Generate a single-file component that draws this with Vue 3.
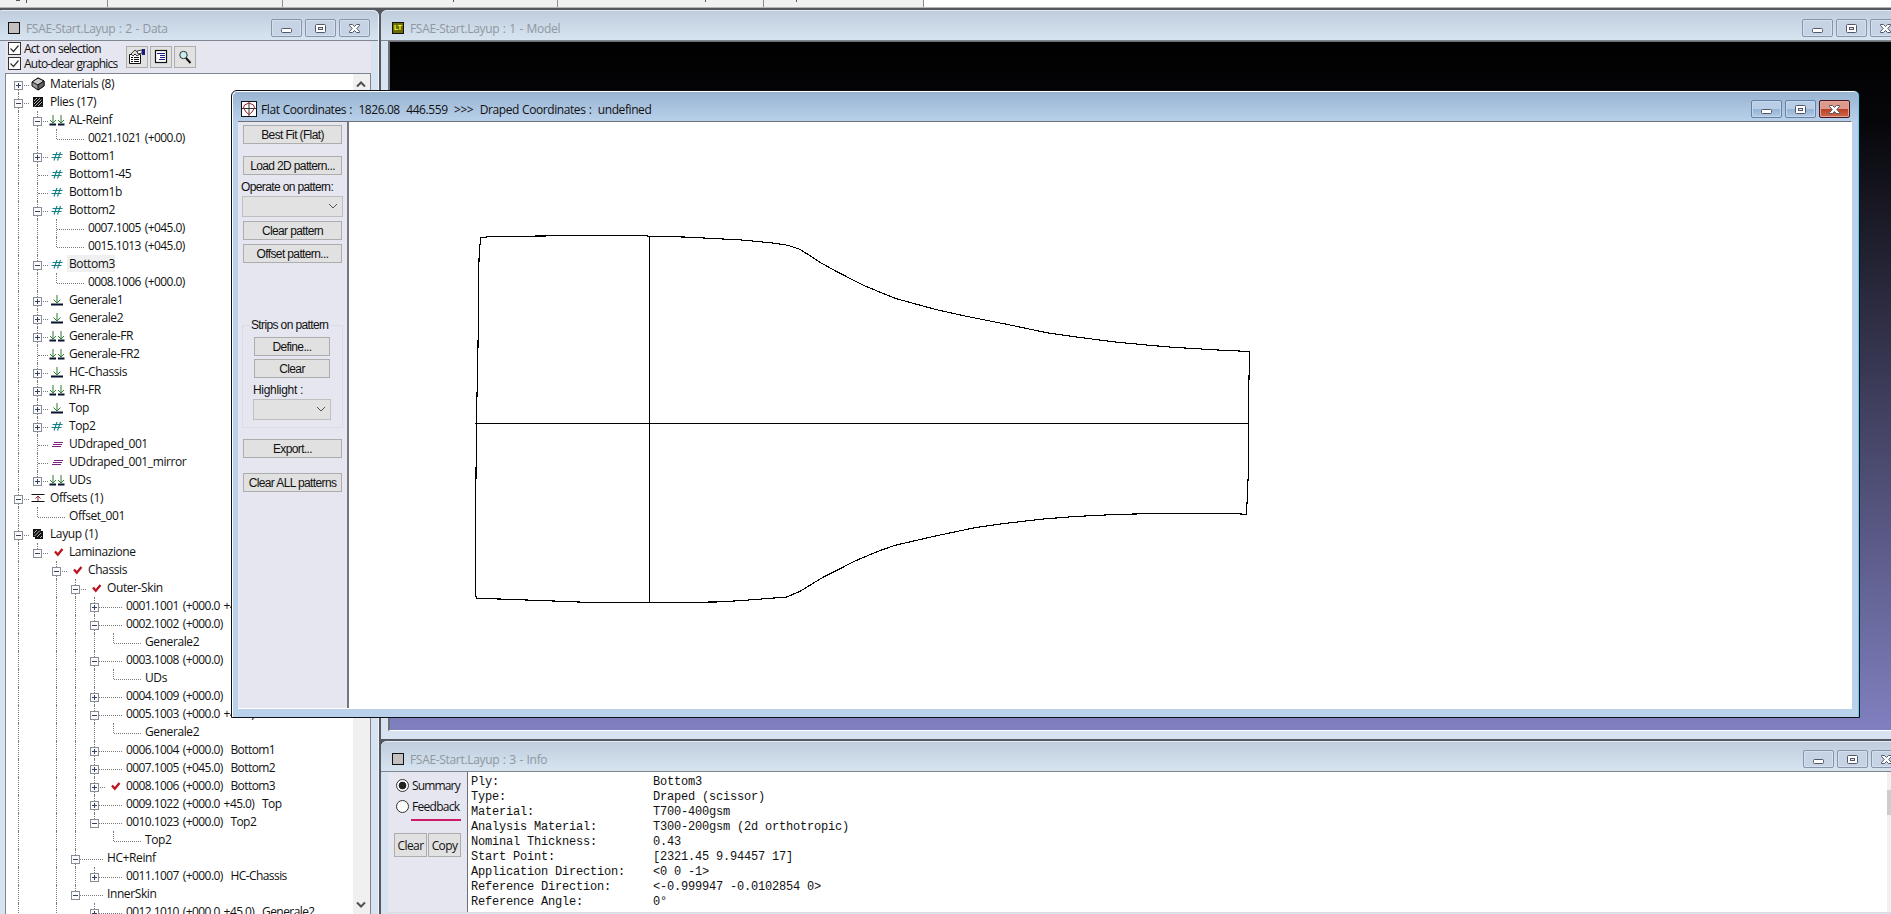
<template>
  <div class="desktop">
    <svg class="symbols" width="0" height="0">
      <symbol id="min" viewBox="0 0 13 11">
        <rect x="1.5" y="5.5" width="10" height="4" rx="1" fill="#fff" stroke="#535666" />
      </symbol>
      <symbol id="max" viewBox="0 0 13 11">
        <rect x="1.5" y="1.5" width="10" height="8" rx="1" fill="#fff" stroke="#535666" />
        <rect x="4.5" y="4.5" width="4" height="2" fill="#dfe8f2" stroke="#535666" />
      </symbol>
      <symbol id="close" viewBox="0 0 13 11">
        <path d="M1.5 1.5h3l2 2 2-2h3v1l-2.7 3 2.7 3v1h-3l-2-2-2 2h-3v-1l2.7-3-2.7-3z" fill="#fff" stroke="#535666" />
      </symbol>
      <symbol id="cube" viewBox="0 0 16 14">
        <path d="M2 5l6-4 6 3v5l-6 4-6-4z" fill="#999" stroke="#111" />
        <path d="M2 5l6-4 6 3-6 4z" fill="#c8c8c8" stroke="#111" />
        <path d="M8 8l6-4v5l-6 4z" fill="#666" stroke="#111" />
      </symbol>
      <symbol id="plies" viewBox="0 0 16 14">
        <rect x="3" y="2" width="10" height="10" fill="#111" />
        <path d="M4 6l3-3M4 9l6-6M4.500 11.500l7-7M8 11l4-4M11 11.500l1-1" stroke="#ddd" stroke-width="0.8" fill="none" />
      </symbol>
      <symbol id="layup" viewBox="0 0 16 14">
        <path d="M3 2h8v2h2v8H5v-2H3z" fill="#111" />
        <path d="M4 6l3-3M4.500 9l5.500-5.500M7 10l4-4M10 11l2-2" stroke="#ddd" stroke-width="0.8" fill="none" />
      </symbol>
      <symbol id="offset" viewBox="0 0 16 14">
        <path d="M1.500 3.500h13M1.500 10.500h13" stroke="#111" stroke-width="1.200" />
        <path d="M8 10V5M5.500 7.500L8 5l2.500 2.500" stroke="#8c2832" fill="none" />
      </symbol>
      <symbol id="hash" viewBox="0 0 16 14">
        <path d="M3.500 5.500h10M2.500 8.500h10M8 3L5 11.500M11.500 3L8.500 11.500" stroke="#128087" stroke-width="1.100" fill="none" />
      </symbol>
      <symbol id="arrow" viewBox="0 0 16 14">
        <path d="M8 2v8M4.500 6.500L8 10l3.500-3.500" stroke="#2c7f33" fill="none" />
        <rect x="2" y="10.500" width="12" height="2" fill="#07122e" />
      </symbol>
      <symbol id="arrows" viewBox="0 0 16 14">
        <path d="M4 2v8M1 7l3 3 3-3M12 2v8M9 7l3 3 3-3" stroke="#2c7f33" fill="none" />
        <path d="M.5 11.500h6.500M9 11.500h6.500" stroke="#07122e" stroke-width="2" />
      </symbol>
      <symbol id="ud" viewBox="0 0 16 14">
        <path d="M5 5.500h9M4 7.500h9M3 9.500h9" stroke="#80207e" stroke-width="1.100" />
      </symbol>
      <symbol id="check" viewBox="0 0 16 14">
        <path d="M6 6.500l2.800 3.300L13.500 4" stroke="#b9141f" stroke-width="2.300" fill="none" />
      </symbol>
    </svg>

    <div class="ribbon">
      <i v-for="(w, i) in ribbonCells" :key="i" :style="{ width: w + 'px' }"></i>
      <svg class="ticks" width="924" height="3"><path d="M16 .5h4M26.500 0v3M453.500 0v2M705.500 0v2M796.500 0v2" stroke="#555" /></svg>
    </div>

    <!-- Data tree -->
    <section class="win data-win">
      <header class="title">
        <span class="doc-icon"></span>
        <span class="caption">FSAE-Start.Layup : 2 - Data</span>
        <span class="controls">
          <b v-for="c in controls" :key="c" :class="c"><svg width="13" height="11"><use :href="'#' + c" /></svg></b>
        </span>
      </header>
      <div class="toolbar">
        <div class="checks">
          <label v-for="t in toggles" :key="t">
            <svg width="13" height="13"><rect x=".5" y=".5" width="12" height="12" fill="#fff" stroke="#333" /><path d="M2.500 6.500l3 3 5-6" fill="none" stroke="#333" stroke-width="1.200" /></svg>
            <span>{{ t }}</span>
          </label>
        </div>
        <div class="tools">
          <button>
            <svg width="18" height="18"><path d="M1.500 6.500h11v9h-11z" fill="#fff" stroke="#111" /><path d="M3 9.500h2M6 9.500h5M3 11.500h2M6 11.500h5M3 13.500h2M6 13.500h5" stroke="#111" /><path d="M3 6l4-4 5 4-3 2-2-2-2 2z" fill="#ddd" stroke="#111" stroke-width=".8" /><path d="M9 3l5-1v3l-4 1z" fill="#fff" stroke="#111" stroke-width=".8" /><path d="M14 1h3v6h-3z" fill="#1a1a80" /></svg>
          </button>
          <button>
            <svg width="18" height="18"><rect x="3.500" y="2.500" width="11" height="12" fill="#fff" stroke="#111" stroke-width="1.200" /><path d="M5 5.500h2M7 5.500h6M8 7.500h5M8 9.500h5M7 11.500h6" stroke="#1a1a80" /></svg>
          </button>
          <button>
            <svg width="18" height="18"><circle cx="7.500" cy="7" r="3.700" fill="#c8f0f0" stroke="#333" /><path d="M10 10l4.500 5" stroke="#111" stroke-width="2" /></svg>
          </button>
        </div>
      </div>
      <div class="tree-box">
        <div class="tree">
          <div v-for="(row, i) in rows" :key="i" class="row">
            <span v-for="(line, l) in row.guides" :key="l" class="cell" :class="{ line }"></span>
            <span class="cell own" :class="{ line: row.continues, first: i === 0 }">
              <i class="dots" :class="{ long: !row.icon }"></i>
              <svg v-if="row.box" class="box" width="9" height="9">
                <rect x=".5" y=".5" width="8" height="8" fill="#fbfbfb" stroke="#8a8c98" />
                <path :d="row.box === '+' ? 'M2 4.500h5M4.500 2v5' : 'M2 4.500h5'" stroke="#33415e" />
              </svg>
            </span>
            <span class="icon"><svg v-if="row.icon" width="16" height="14"><use :href="'#' + row.icon" /></svg></span>
            <span class="text" :class="{ num: /^\d/.test(row.text), selected: row.selected }">{{ row.text }}</span>
          </div>
        </div>
        <div class="scroll">
          <svg width="17" height="18"><path d="M4 11.500l4-4 4 4" /></svg>
          <svg width="17" height="18"><path d="M4 6.500l4 4 4-4" /></svg>
        </div>
      </div>
    </section>

    <!-- Model view -->
    <section class="win model-win">
      <header class="title">
        <span class="lt-icon">LT</span>
        <span class="caption">FSAE-Start.Layup : 1 - Model</span>
        <span class="controls">
          <b v-for="c in controls" :key="c" :class="c"><svg width="13" height="11"><use :href="'#' + c" /></svg></b>
        </span>
      </header>
      <div class="viewport"></div>
    </section>

    <!-- Info -->
    <section class="win info-win">
      <header class="title">
        <span class="doc-icon"></span>
        <span class="caption">FSAE-Start.Layup : 3 - Info</span>
        <span class="controls">
          <b v-for="c in controls" :key="c" :class="c"><svg width="13" height="11"><use :href="'#' + c" /></svg></b>
        </span>
      </header>
      <div class="info-body">
        <div class="info-side">
          <label><span class="radio on"></span>Summary</label>
          <label><span class="radio"></span>Feedback</label>
          <div class="pink"></div>
          <div class="info-buttons"><button>Clear</button><button>Copy</button></div>
        </div>
        <div class="info-text">
          <template v-for="[k, v] in info" :key="k"><span>{{ k }}:</span><span>{{ v }}</span></template>
        </div>
        <div class="info-scroll"><i></i></div>
      </div>
    </section>

    <!-- Flat pattern -->
    <section class="flat-win">
      <header class="title">
        <svg class="flat-icon" width="16" height="16"><rect x=".5" y=".5" width="15" height="15" fill="#fff" stroke="#111" /><path d="M8 1v14M1 7.500h14" stroke="#333" /><path d="M3.500 4l4.500-2 4.500 2 1 3-2.500 4-3 2.500L5 11 2.500 7z" fill="none" stroke="#a02030" /></svg>
        <span class="caption">{{ flatTitle }}</span>
        <span class="controls active">
          <b v-for="c in controls" :key="c" :class="c"><svg width="13" height="11"><use :href="'#' + c" /></svg></b>
        </span>
      </header>
      <div class="flat-body">
        <aside class="flat-side">
          <button>Best Fit (Flat)</button>
          <button class="load">Load 2D pattern...</button>
          <span class="operate">Operate on pattern:</span>
          <div class="select"><svg width="10" height="7"><path d="M1 1l4 4 4-4" /></svg></div>
          <button class="clear">Clear pattern</button>
          <button class="offset">Offset pattern...</button>
          <fieldset>
            <legend>Strips on pattern</legend>
            <button>Define...</button>
            <button>Clear</button>
            <span class="highlight">Highlight&nbsp;:</span>
            <div class="select"><svg width="10" height="7"><path d="M1 1l4 4 4-4" /></svg></div>
          </fieldset>
          <button class="export">Export...</button>
          <button class="all">Clear ALL patterns</button>
        </aside>
        <svg class="canvas" width="1502" height="586" viewBox="349 122 1502 586">
          <polygon :points="outline" />
          <path d="M475 423.500H1248.500M649.500 236V602" />
        </svg>
      </div>
    </section>
  </div>
</template>

<script setup>
  const controls = ['min', 'max', 'close'];
  const toggles = ['Act on selection', 'Auto-clear graphics'];
  const ribbonCells = [108, 175, 275, 206, 160];
  const flatTitle = 'Flat Coordinates :  1826.08  446.559  >>>  Draped Coordinates :  undefined';

  // [depth, expander, icon, label]
  const nodes = [
    [0, '+', 'cube', 'Materials (8)'],
    [0, '-', 'plies', 'Plies (17)'],
    [1, '-', 'arrows', 'AL-Reinf'],
    [2, '', '', '0021.1021 (+000.0)'],
    [1, '+', 'hash', 'Bottom1'],
    [1, '', 'hash', 'Bottom1-45'],
    [1, '', 'hash', 'Bottom1b'],
    [1, '-', 'hash', 'Bottom2'],
    [2, '', '', '0007.1005 (+045.0)'],
    [2, '', '', '0015.1013 (+045.0)'],
    [1, '-', 'hash', 'Bottom3'],
    [2, '', '', '0008.1006 (+000.0)'],
    [1, '+', 'arrow', 'Generale1'],
    [1, '+', 'arrow', 'Generale2'],
    [1, '+', 'arrows', 'Generale-FR'],
    [1, '', 'arrows', 'Generale-FR2'],
    [1, '+', 'arrow', 'HC-Chassis'],
    [1, '+', 'arrows', 'RH-FR'],
    [1, '+', 'arrow', 'Top'],
    [1, '+', 'hash', 'Top2'],
    [1, '', 'ud', 'UDdraped_001'],
    [1, '', 'ud', 'UDdraped_001_mirror'],
    [1, '+', 'arrows', 'UDs'],
    [0, '-', 'offset', 'Offsets (1)'],
    [1, '', '', 'Offset_001'],
    [0, '-', 'layup', 'Layup (1)'],
    [1, '-', 'check', 'Laminazione'],
    [2, '-', 'check', 'Chassis'],
    [3, '-', 'check', 'Outer-Skin'],
    [4, '+', '', '0001.1001 (+000.0 +45.0)  Generale1'],
    [4, '-', '', '0002.1002 (+000.0)  Generale2'],
    [5, '', '', 'Generale2'],
    [4, '-', '', '0003.1008 (+000.0)  UDs'],
    [5, '', '', 'UDs'],
    [4, '+', '', '0004.1009 (+000.0)  UDs'],
    [4, '-', '', '0005.1003 (+000.0 +45.0)'],
    [5, '', '', 'Generale2'],
    [4, '+', '', '0006.1004 (+000.0)  Bottom1'],
    [4, '+', '', '0007.1005 (+045.0)  Bottom2'],
    [4, '+', 'check', '0008.1006 (+000.0)  Bottom3'],
    [4, '+', '', '0009.1022 (+000.0 +45.0)  Top'],
    [4, '-', '', '0010.1023 (+000.0)  Top2'],
    [5, '', '', 'Top2'],
    [3, '-', '', 'HC+Reinf'],
    [4, '+', '', '0011.1007 (+000.0)  HC-Chassis'],
    [3, '-', '', 'InnerSkin'],
    [4, '+', '', '0012.1010 (+000.0 +45.0)  Generale2']
  ];

  // levels that still have siblings below the visible part of the tree
  const openLevels = [0, 2];

  function hasNext(index, level) {
    for (let j = index + 1; j < nodes.length; j++) {
      if (nodes[j][0] === level) return true;
      if (nodes[j][0] < level) return false;
    }
    return openLevels.includes(level);
  }

  const rows = nodes.map(([depth, box, icon, text], i) => ({
    box,
    icon,
    text,
    selected: text === 'Bottom3',
    continues: hasNext(i, depth),
    guides: Array.from({ length: depth }, (_, l) => hasNext(i, l))
  }));

  const info = [
    ['Ply', 'Bottom3'],
    ['Type', 'Draped (scissor)'],
    ['Material', 'T700-400gsm'],
    ['Analysis Material', 'T300-200gsm (2d orthotropic)'],
    ['Nominal Thickness', '0.43'],
    ['Start Point', '[2321.45 9.94457 17]'],
    ['Application Direction', '<0 0 -1>'],
    ['Reference Direction', '<-0.999947 -0.0102854 0>'],
    ['Reference Angle', '0°']
  ];

  const outline = [
    // top edge
    '480.5,237.5 493,236.5 590,235.5 645,235.5 650,236.5 684,237 708,238.2 741.7,240 773,243 788,245.3',
    '800,249.3 821.7,263.3 838,272.3 860,283.5 865,286 895,298.3 935,309.3 968.3,316.7 1006.7,324.3',
    '1046.7,332.7 1076.7,337 1115,342 1150,345.3 1173,347.3 1218,350 1249.5,351.5',
    // right edge
    '1249.3,362 1248.5,404 1248.3,473 1246.5,514.5',
    // bottom edge
    '1235,513.5 1155,513.5 1115,514.5 1075,516.5 1040,519.3 1003,523.7 975,527.7 936.7,535.7 895,545.3',
    '878,551.3 855,561 840,568.7 823,577.3 800,591.3 786.7,597 740,600.7 716,602 649.5,602.5 591,602.5',
    '553,601 499,599 476.5,598.3',
    // left edge
    '475.5,594 475.5,531 476.5,420 478,346.7 479,259'
  ].join(' ');
</script>

<style>
  body {
    overflow: hidden;
  }
</style>

<style scoped>
  .desktop {
    position: relative;
    width: 1891px;
    height: 914px;
    overflow: hidden;
    background: #55585e;
    font-family: "Open Sans", "Noto Sans", sans-serif;
    font-size: 12px;
    color: #111;
  }

  .desktop * {
    box-sizing: border-box;
  }

  .symbols {
    position: absolute;
  }

  .ribbon {
    display: flex;
    height: 8px;
    background: #fff;
    border-bottom: 1px solid #b4b4b4;
  }

  .ribbon i {
    height: 7px;
    background: #f0f0f0;
    border-right: 1px solid #8c8c8c;
  }

  .ticks {
    position: absolute;
    left: 0;
    top: 0;
  }

  /* windows */
  .win {
    position: absolute;
    display: flex;
    flex-direction: column;
    background: #d7e3f0;
    border-radius: 6px 6px 0 0;
  }

  .data-win {
    left: -3px;
    top: 10px;
    width: 382px;
    height: 910px;
    padding: 0 7px 0 8px;
    border-right: 1px solid #eef3f8;
  }

  .model-win {
    left: 381px;
    top: 10px;
    width: 1518px;
    height: 729px;
    padding: 0 0 8px 7px;
  }

  .info-win {
    left: 381px;
    top: 741px;
    width: 1518px;
    height: 180px;
    padding: 0 0 0 7px;
  }

  .title {
    display: flex;
    flex: none;
    align-items: center;
    height: 31px;
  }

  .win .title {
    margin: 0 -7px;
    padding: 5px 7px 0;
    border-radius: 6px 6px 0 0;
    border-top: 1px solid #e4ebf3;
    border-bottom: 1px solid #7f868f;
    background: linear-gradient(#c0cddd, #d7e4f0);
  }

  .data-win .title {
    padding-left: 11px;
    padding-right: 8px;
    margin: 0 -7px 0 -8px;
  }

  .model-win .title,
  .info-win .title {
    padding-left: 11px;
  }

  .info-win .title {
    padding-right: 4px;
  }

  .model-win .title {
    padding-right: 5px;
  }

  .caption {
    flex: 1;
    white-space: pre;
    letter-spacing: -0.42px;
    word-spacing: 0.5px;
  }

  .win .caption {
    color: #8f979f;
    letter-spacing: -0.32px;
    word-spacing: 0.8px;
  }

  .doc-icon {
    width: 12px;
    height: 12px;
    margin-right: 6px;
    background: #c3c0bf;
    border: 1px solid #111;
  }

  .lt-icon {
    width: 12px;
    height: 12px;
    margin-right: 6px;
    background: #6b6b00;
    border: 1px solid #111;
    color: #ffff30;
    font: bold 7px/10px "Liberation Sans", sans-serif;
    text-align: center;
  }

  .controls {
    display: flex;
    gap: 3px;
    height: 18px;
  }

  .controls b {
    display: flex;
    width: 31px;
    height: 18px;
    align-items: center;
    justify-content: center;
    border: 1px solid #8794ab;
    border-radius: 2px;
    box-shadow: inset 0 0 0 1px #d5e0ed;
    background: #c6d3e4;
  }

  .controls.active b {
    border-color: #6580a3;
    background: linear-gradient(#b9cee6 50%, #94b2d3 50%, #b1cae5);
    box-shadow: inset 0 0 0 1px #c3d8ee;
  }

  .controls.active .close {
    border-color: #431422;
    background: linear-gradient(#dc9a8c 48%, #b83b22 48%, #cd6a4c);
    box-shadow: inset 0 0 0 1px #e2a598;
  }

  /* data window */
  .toolbar {
    display: flex;
    flex: none;
    height: 32px;
    padding-left: 3px;
    background: #e6e6f0;
  }

  .checks {
    display: flex;
    flex-direction: column;
    gap: 2px;
    width: 118px;
    padding-top: 1px;
  }

  .checks label {
    display: flex;
    gap: 3px;
    height: 13px;
    line-height: 14px;
    white-space: nowrap;
    letter-spacing: -0.78px;
    word-spacing: 0.5px;
  }

  .checks svg {
    flex: none;
  }

  .tools {
    display: flex;
    gap: 2px;
    padding-top: 5px;
  }

  button {
    display: flex;
    align-items: center;
    justify-content: center;
    padding: 0;
    border: 1px solid #adadad;
    background: #e1e1e1;
    color: #111;
    white-space: nowrap;
  }

  .tools button {
    width: 22px;
    height: 22px;
  }

  .tree-box {
    display: flex;
    flex: 1;
    border: 1px solid #7f868f;
    background: #fff;
  }

  .tree {
    flex: 1;
    padding: 1px 0 0 3px;
    overflow: hidden;
  }

  .row {
    display: flex;
    height: 18px;
    line-height: 17px;
    white-space: pre;
  }

  .cell {
    position: relative;
    flex: none;
    width: 19px;
    height: 18px;
  }

  .cell.line::before,
  .own::before {
    content: "";
    position: absolute;
    left: 9px;
    top: 0;
    height: 10px;
    border-left: 1px dotted #7a7a7a;
  }

  .cell.line::before {
    height: 18px;
  }

  .own.first::before {
    top: 10px;
    height: 8px;
  }

  .dots {
    position: absolute;
    left: 10px;
    top: 10px;
    width: 10px;
    border-top: 1px dotted #7a7a7a;
  }

  .dots.long {
    width: 27px;
  }

  .box {
    position: absolute;
    left: 5px;
    top: 6px;
  }

  .icon {
    flex: none;
    width: 22px;
    padding: 2px 0 0 2px;
  }

  .icon svg {
    display: block;
  }

  .text {
    letter-spacing: -0.4px;
    word-spacing: 0.5px;
  }

  .text.num {
    letter-spacing: -0.57px;
    word-spacing: 1.3px;
  }

  .text.selected {
    height: 17px;
    margin-left: -2px;
    padding-left: 2px;
    background: #f0f0f0;
  }

  .scroll {
    display: flex;
    flex-direction: column;
    justify-content: space-between;
    width: 17px;
    padding: 1px 0 7px;
    background: #f0f0f0;
  }

  .scroll path {
    fill: none;
    stroke: #505050;
    stroke-width: 2;
  }

  /* model window */
  .viewport {
    flex: 1;
    border: 1px solid #6c7076;
    border-left-width: 2px;
    border-bottom: 1px solid #fff;
    background: linear-gradient(#000, #07070b 12%, #1e1d2b 28%, #8080c0);
  }

  /* info window */
  .info-body {
    display: flex;
    height: 141px;
    border-bottom: 1px solid #dcdcdc;
  }

  .info-side {
    width: 80px;
    padding: 5px 6px 0 7px;
    background: #e6e6f0;
    border-right: 1px solid #6c7076;
  }

  .info-side label {
    display: flex;
    align-items: center;
    gap: 3px;
    height: 16px;
    margin-bottom: 5px;
    padding-left: 1px;
    letter-spacing: -0.85px;
  }

  .info-side label + label {
    letter-spacing: -0.7px;
  }

  .radio {
    flex: none;
    width: 13px;
    height: 13px;
    border: 1px solid #333;
    border-radius: 50%;
    background: #fff;
  }

  .radio.on {
    background: radial-gradient(circle, #222 3.5px, #fff 4.2px);
  }

  .pink {
    height: 2px;
    margin: 0 0 12px 16px;
    background: #cc1a66;
  }

  .info-buttons {
    display: flex;
    gap: 1px;
    margin-left: -1px;
  }

  .info-buttons button {
    width: 33px;
    height: 24px;
    font: 12px "Open Sans", sans-serif;
    letter-spacing: -0.6px;
  }

  .info-text {
    display: grid;
    flex: 1;
    grid-template-columns: 182px 1fr;
    grid-auto-rows: 15px;
    align-content: start;
    padding: 3px 0 0 3px;
    background: #fff;
    font: 12px/15px "Liberation Mono", monospace;
    letter-spacing: -0.2px;
    white-space: pre;
  }

  .info-scroll {
    width: 12px;
    padding-top: 18px;
    background: #f0f0f0;
  }

  .info-scroll i {
    display: block;
    height: 25px;
    background: #cdcdcd;
  }

  /* flat window */
  .flat-win {
    position: absolute;
    left: 231px;
    top: 90px;
    width: 1629px;
    height: 628px;
    padding: 0 7px 0 6px;
    border: 1px solid #0b1116;
    border-radius: 6px 6px 0 0;
    background: #b9d1ea;
    box-shadow: inset -1px 0 #5fd0ec, inset 1px 1px #fff;
  }

  .flat-win .title {
    height: 29px;
    margin: 1px -6px 0 -5px;
    padding: 5px 8px 0;
    border-radius: 5px 5px 0 0;
    background: linear-gradient(#98b4d1, #b9d0ea);
  }

  .flat-icon {
    margin-right: 4px;
  }

  .flat-body {
    display: flex;
    height: 588px;
    border-top: 1px solid #6c7076;
    border-right: 1px solid #fff;
    border-bottom: 1px solid #fff;
    background: #fff;
  }

  .flat-side {
    display: flex;
    flex-direction: column;
    flex: none;
    width: 111px;
    padding: 3px 4px 0 5px;
    border-right: 2px solid #75777e;
    background: #e6e6f0;
    font: 12px/14px "Liberation Sans", Arial, sans-serif;
    letter-spacing: -0.63px;
    white-space: nowrap;
  }

  .flat-side button {
    flex: none;
    width: 99px;
    height: 19px;
    font: inherit;
    letter-spacing: inherit;
  }

  .flat-side .load {
    margin-top: 12px;
  }

  .operate {
    margin: 5px 0 2px -2px;
  }

  .select {
    display: flex;
    flex: none;
    align-items: center;
    justify-content: flex-end;
    width: 101px;
    height: 21px;
    margin-left: -1px;
    padding-right: 4px;
    border: 1px solid #bfbfbf;
    background: #e2e2e2;
  }

  .select path {
    fill: none;
    stroke: #555;
  }

  .flat-side .clear {
    margin-top: 4px;
  }

  .flat-side .offset {
    margin-top: 4px;
  }

  fieldset {
    flex: none;
    width: 101px;
    height: 110px;
    min-width: 0;
    margin: 55px 0 0 -1px;
    padding: 5px 10px 0 11px;
    border: 1px solid #dcdce6;
  }

  legend {
    margin-left: -4px;
    padding: 0 1px;
  }

  fieldset button:nth-of-type(n) {
    width: 76px;
    margin-bottom: 3px;
  }

  .highlight {
    display: block;
    margin: 5px 0 2px -1px;
    letter-spacing: -0.3px;
  }

  fieldset .select {
    width: 78px;
  }

  .flat-side .export {
    margin-top: 11px;
  }

  .flat-side .all {
    margin-top: 15px;
  }

  .canvas {
    display: block;
    flex: none;
    fill: none;
    stroke: #000;
    stroke-width: 1;
    shape-rendering: crispEdges;
  }

  .canvas polygon {
    stroke-width: 1.1;
  }
</style>
